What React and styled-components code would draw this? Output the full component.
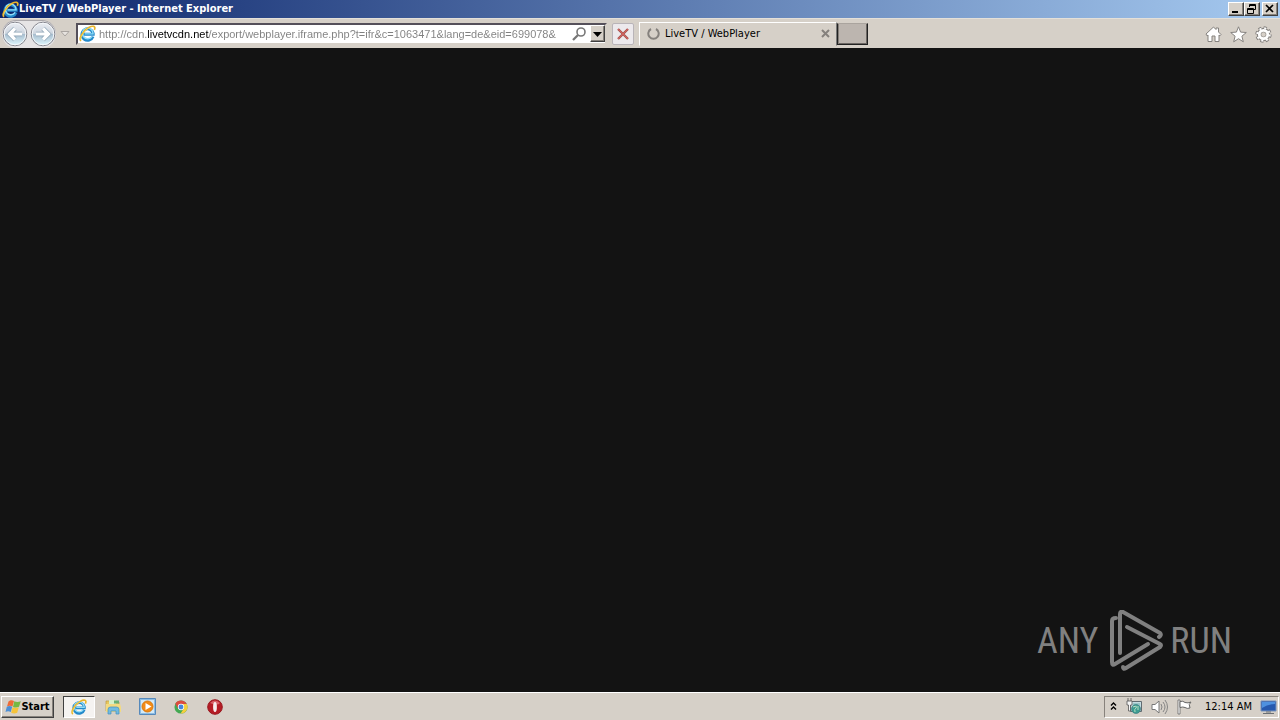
import React from 'react';
import styled, { createGlobalStyle } from 'styled-components';

const ui = '"DejaVu Sans Condensed", "DejaVu Sans", sans-serif';
const face = '#d6d0c8';

const Global = createGlobalStyle`
  * { box-sizing: border-box; }
  body { margin: 0; background: #131313; font-family: ${ui}; font-size: 11px; color: #000; }
  button, input { font: inherit; color: inherit; margin: 0; padding: 0; }
  svg { display: block; flex: none; }
`;

const Screen = styled.div`
  display: flex; flex-direction: column; min-height: 100vh;
`;
const TitleBar = styled.header`
  display: flex; align-items: center; height: 18px; padding: 0 2px;
  background: linear-gradient(90deg, #0b246a, #a6caf0);
`;
const Title = styled.h1`
  flex: 1; margin: 0; font-size: 11px; line-height: 18px; font-weight: 700; color: #fff; white-space: nowrap;
`;
const Raised = styled.button`
  display: flex; align-items: center; justify-content: center;
  background: ${face}; border: 1px solid; border-color: #fff #404040 #404040 #fff;
  box-shadow: inset -1px -1px #87827c;
`;
const WindowButton = styled(Raised)`
  width: 16px; height: 14px; margin-left: ${p => (p.$apart ? '2px' : '0')};
`;
const NavBar = styled.nav`
  display: flex; align-items: center; height: 30px; background: ${face}; border-top: 1px solid #e4e0d9;
`;
const Flat = styled.button`
  display: flex; align-items: center; justify-content: center; border: 0; background: none;
`;
const History = styled.div`
  display: flex; align-items: center; width: 76px; padding-left: 2px;
`;
const HistoryPair = styled.div`
  display: flex; gap: 2px; height: 28px; align-items: center; border-radius: 14px;
  background: #e6e4e5; box-shadow: inset 0 1px #aaa7aa;
`;
const Address = styled.form`
  display: flex; align-items: center; width: 531px; height: 22px; padding: 1px 0 1px 1px;
  background: #fff; border: 2px solid; border-color: #55505a #d6d0c8 #d6d0c8 #55505a;
`;
/* The host part of the address is darker than the rest. */
const Url = styled.input`
  flex: 1; min-width: 0; height: 18px; margin-left: 3px; border: 0; outline: 0;
  font-family: "Liberation Sans", sans-serif;
  background: linear-gradient(90deg, #808080 48px, #000 48px, #000 110px, #808080 110px);
  background-clip: text; -webkit-background-clip: text; -webkit-text-fill-color: transparent;
`;
const Stop = styled(Flat)`
  width: 22px; height: 22px; margin: 0 5px; background: #ece9ec; border: 1px solid #b9b4b8; border-radius: 2px;
`;
const Tab = styled.div`
  display: flex; align-items: center; gap: 5px; width: 198px; height: 24px; padding: 0 5px 0 7px;
  border: 1px solid; border-color: #fff #777 transparent #fff;
`;
const TabTitle = styled.span`
  flex: 1; white-space: nowrap;
`;
const NewTab = styled.button`
  width: 31px; height: 22px; background: #bcb5af; border: 1px solid #222; border-top-color: #aaa49e;
  box-shadow: inset 1px 0 #847f7a, inset -1px -1px #6c6763;
`;
const Tools = styled.div`
  display: flex; gap: 8px; margin-left: auto; padding: 2px 8px 0 0;
`;
const Page = styled.main`
  display: flex; flex: 1; align-items: flex-end; justify-content: flex-end;
  padding: 0 48px 20px; background: #131313;
`;
const Brand = styled.div`
  display: flex; align-items: center; gap: 7px; color: #808080;
  font: 36px/62px "Liberation Sans Narrow", "Roboto Condensed", "Liberation Sans", sans-serif;
`;
const TaskBar = styled.footer`
  display: flex; align-items: center; height: 28px; padding: 0 1px;
  background: ${face}; border-top: 1px solid #fff;
`;
const StartButton = styled(Raised)`
  width: 53px; height: 22px; font-weight: 700;
`;
const Apps = styled.div`
  display: flex; align-items: center; gap: 2px; margin-left: 9px;
`;
const TaskButton = styled(Flat)`
  width: 32px; height: 22px;
  border: 1px solid;
  border-color: ${p => (p.$active ? '#404040 #fff #fff #404040' : 'transparent')};
  background: ${p => (p.$active ? '#f5f3f1' : 'none')};
`;
const Tray = styled.div`
  display: flex; align-items: center; gap: 8px; margin-left: auto; height: 22px; padding: 0 1px 0 4px;
  border: 1px solid; border-color: #87827c #fff #fff #87827c;
`;
const Clock = styled.time`
  margin-left: 4px; white-space: nowrap;
`;

const IE = ({ size = 17 }) => (
  <svg width={size} height={size} viewBox="0 0 18 18" fill="none">
    <path d="M14.8 12.1A6 6 0 1 1 15 8.800v1.100H5" stroke="#2389ca" strokeWidth="3.200" />
    <path d="M13.900 12A5.600 5.600 0 1 1 14.800 8.500v.9H6" stroke="#8edcf8" strokeWidth="1.500" />
    <path d="M2.200 16.800C-1 15 4 6.200 10.400 2.700 14.500.4 18.200.8 16.200 5.200" stroke="#e9b429" strokeWidth="1.800" />
    <path d="M2 15.500C1.900 12 5.400 6.200 10.200 3.300" stroke="#ffe46c" strokeWidth=".7" />
  </svg>
);
const Arrow = ({ back }) => {
  const shape = back ? 'M20 13H8M13 7.500 7.500 13l5.500 5.500' : 'M6 13H18M13 7.500l5.500 5.500-5.500 5.500';
  const id = back ? 'back-fill' : 'forward-fill';
  return (
    <svg width="26" height="26" viewBox="0 0 26 26">
      <defs>
        <linearGradient id={id} x1="0" y1="0" x2="0" y2="1">
          <stop stopColor="#eceef3" /><stop offset=".48" stopColor="#cdd5df" /><stop offset=".52" stopColor="#a9bfd0" /><stop offset="1" stopColor="#dff8fe" />
        </linearGradient>
      </defs>
      <circle cx="13" cy="13" r="11.800" fill={`url(#${id})`} stroke="#85858d" />
      <circle cx="13" cy="13" r="10.800" fill="none" stroke="#f5f8fb" />
      <path d={shape} fill="none" stroke="#8ca3b5" strokeWidth="4.600" />
      <path d={shape} fill="none" stroke="#fff" strokeWidth="3.200" />
    </svg>
  );
};
const Flag = () => (
  <svg width="16" height="16" viewBox="0 0 16 16">
    <path d="M3.500 2.500C5.500.8 7 1 9 2L7.500 7.500C5.500 6.500 4 6.500 2 7.500z" fill="#ed6b37" />
    <path d="M9.300 2.300c2 1 4 1 6.500 0L14 7.800c-2 1-4 1-6 .1z" fill="#75b843" />
    <path d="M1.800 7.800c2-1 3.500-1 5.400 0L5.800 13c-2-1-3.500-1-5.300.1z" fill="#4d8fd5" />
    <path d="M7.500 8.200c2 1 4 1 6.300 0l-1.600 5.500c-2 1-4 1-6 0z" fill="#f5c33b" />
  </svg>
);
const Folder = () => (
  <svg width="17" height="17" viewBox="0 0 17 17">
    <path d="M1 3h5l1 1h7v9H1z" fill="#e7c760" stroke="#bf9b3c" strokeWidth=".7" />
    <path d="M4 2h7v4H4z" fill="#d7efc7" /><path d="M9 2.500h5v3H9z" fill="#69af74" />
    <path d="M1 6h14l1 3v5H1z" fill="#f3da80" />
    <path d="M3 16v-4.500Q3 9 5.500 9h6Q14 9 14 11.500V16h-3v-3H6v3z" fill="#72bbe0" stroke="#438fbd" strokeWidth=".7" />
  </svg>
);
const MediaPlayer = () => (
  <svg width="17" height="17" viewBox="0 0 17 17">
    <path d="M.5.500h16v16H.5z" fill="#8cbde4" stroke="#5689bb" /><path d="M2 2h13v13H2z" fill="#d3e9f7" />
    <circle cx="8.500" cy="8.500" r="5.500" fill="#f28b16" stroke="#d9780e" /><path d="m6.500 5 6 3.500-6 3.500z" fill="#fff" />
  </svg>
);
const Chrome = () => (
  <svg width="14" height="14" viewBox="0 0 16 16">
    <circle cx="8" cy="8" r="7.500" fill="#43a852" />
    <path d="M1.500 4.200A7.500 7.500 0 0 1 14.500 4.500H8L4.800 10z" fill="#dc4b3f" />
    <path d="M8 4.500h6.600A7.500 7.500 0 0 1 7.500 15.500L11.200 9.800z" fill="#f5cf3d" />
    <circle cx="8" cy="8" r="3.600" fill="#fff" /><circle cx="8" cy="8" r="2.800" fill="#4586dc" />
  </svg>
);
const Opera = () => (
  <svg width="16" height="16" viewBox="0 0 16 16">
    <circle cx="8" cy="8" r="7.300" fill="#b51c25" stroke="#9a1820" />
    <path d="M3 4Q8-1 13 4 11 7 3 4" fill="#d9646b" /><ellipse cx="8" cy="8" rx="1.900" ry="5" fill="#f7eded" />
  </svg>
);

export default function App() {
  return (
    <Screen>
      <Global />
      <TitleBar>
        <IE />
        <Title>LiveTV / WebPlayer - Internet Explorer</Title>
        <WindowButton aria-label="Minimize"><svg width="12" height="10"><path d="M2 8h6" stroke="#000" strokeWidth="2" /></svg></WindowButton>
        <WindowButton aria-label="Restore"><svg width="12" height="10" fill="none" stroke="#000"><path d="M3.500 3V.5h6v5H7.500M3 1.500h7M1.500 4.500h6v5h-6zM1 5.500h7" /></svg></WindowButton>
        <WindowButton $apart aria-label="Close"><svg width="12" height="10"><path d="m2 1 7 7m0-7L2 8" stroke="#000" strokeWidth="1.700" /></svg></WindowButton>
      </TitleBar>
      <NavBar>
        <History>
          <HistoryPair>
            <Flat aria-label="Back"><Arrow back /></Flat>
            <Flat aria-label="Forward"><Arrow /></Flat>
          </HistoryPair>
          <Flat aria-label="Recent pages"><svg width="18" height="10"><path d="M5 2.500h8L9 7z" fill="#e7e3df" stroke="#aaa5a1" /></svg></Flat>
        </History>
        <Address onSubmit={e => e.preventDefault()}>
          <IE />
          <Url aria-label="Address" defaultValue="http://cdn.livetvcdn.net/export/webplayer.iframe.php?t=ifr&c=1063471&lang=de&eid=699078&" />
          <Flat aria-label="Search"><svg width="18" height="16" fill="none" stroke="#777"><circle cx="9" cy="6" r="4" strokeWidth="1.600" /><path d="m6 9-5 5" strokeWidth="2.300" /></svg></Flat>
          <Raised type="button" aria-label="Show addresses"><svg width="13" height="15"><path d="M2 6h9L6.500 11z" fill="#000" /></svg></Raised>
        </Address>
        <Stop aria-label="Stop"><svg width="14" height="14" fill="none"><path d="m2 2 10 10M12 2 2 12" stroke="#a85652" strokeWidth="2.400" /><path d="m2 2 10 10M12 2 2 12" stroke="#d6605d" /></svg></Stop>
        <Tab>
          <svg width="13" height="13" fill="none"><path d="M4 2a5.200 5.200 0 1 0 5 0" stroke="#85817d" strokeWidth="2" /></svg>
          <TabTitle>LiveTV / WebPlayer</TabTitle>
          <Flat aria-label="Close tab"><svg width="11" height="11"><path d="m2 2 7 7m0-7L2 9" stroke="#85817d" strokeWidth="2" /></svg></Flat>
        </Tab>
        <NewTab aria-label="New tab" />
        <Tools>
          <Flat aria-label="Home"><svg width="17" height="17" fill="#fff" stroke="#85827f"><path d="m1 8 7.500-7L11 3.500V2h2.500v4L16 8.500l-1 1.300-1-.8v6.500h-4V10H7v5.500H3V9l-1 .8z" /></svg></Flat>
          <Flat aria-label="Favorites"><svg width="17" height="17" fill="#fff" stroke="#85827f"><path d="m8.500.8 2.100 5.300 5.700.4-4.400 3.700 1.400 5.600-4.800-3.100-4.800 3.100 1.400-5.600L.7 6.500l5.700-.4z" /></svg></Flat>
          <Flat aria-label="Settings"><svg width="17" height="17" viewBox="0 0 17 17" fill="none"><circle cx="8.500" cy="8.500" r="6.600" stroke="#85827f" strokeWidth="3.200" strokeDasharray="3 2.180" /><circle cx="8.500" cy="8.500" r="4.500" stroke="#85827f" strokeWidth="4.400" /><circle cx="8.500" cy="8.500" r="6.200" stroke="#fff" strokeWidth="2" strokeDasharray="2 2.870" /><circle cx="8.500" cy="8.500" r="4.200" stroke="#fff" strokeWidth="2.800" /></svg></Flat>
        </Tools>
      </NavBar>
      <Page>
        <Brand>
          <span>ANY</span>
          <svg width="58" height="62" fill="none" stroke="#808080" strokeWidth="4" strokeLinejoin="round" strokeLinecap="round">
            <path d="M15 43V4q0-3 3-2L55 23q2 2-1 4" />
            <path d="m22 17 33 17q2 1 0 3L21 58q-3 2-3-1" />
            <path d="m43 34-33 20q-3 2-3-2V11q0-3 4-3" />
          </svg>
          <span>RUN</span>
        </Brand>
      </Page>
      <TaskBar>
        <StartButton><Flag />Start</StartButton>
        <Apps>
          <TaskButton $active aria-label="Internet Explorer"><IE size={16} /></TaskButton>
          <TaskButton aria-label="Explorer"><Folder /></TaskButton>
          <TaskButton aria-label="Media Player"><MediaPlayer /></TaskButton>
          <TaskButton aria-label="Chrome"><Chrome /></TaskButton>
          <TaskButton aria-label="Opera"><Opera /></TaskButton>
        </Apps>
        <Tray>
          <Flat aria-label="Show hidden icons"><svg width="9" height="12" fill="none" stroke="#000" strokeWidth="1.400"><path d="m2 4.500 2.500-2.500L7 4.500m-5 4L4.500 6 7 8.500" /></svg></Flat>
          <svg width="17" height="17" viewBox="0 0 17 17"><path d="M4.500 3.500h11v10h-11z" fill="#c5dce2" stroke="#606b70" /><path d="M7 5h7v6H7z" fill="#9bc7c8" /><circle cx="10" cy="11" r="4.500" fill="#3c9c91" stroke="#437d82" strokeWidth=".7" /><path d="M7 9q5-2 3 1-2 1-1 4M12 8v4" stroke="#b8dfc1" fill="none" /><path d="M1 3h5v4H4.500v6h-2V7H1zM2 0v3m3-3v3" fill="#f5f5f5" stroke="#555" strokeWidth=".8" /></svg>
          <svg width="17" height="16" viewBox="0 0 17 16" fill="none" stroke="#858585"><path d="M1 5.500h3L8 2v12l-4-3.500H1z" fill="#fff" stroke="#777" /><path d="M10 5q2 3 0 6m2-8q4 5 0 10m2-12q5 7 0 14" /></svg>
          <svg width="17" height="16" viewBox="0 0 17 16"><path d="M2 1h2v14H2z" fill="#fff" stroke="#666" strokeWidth=".8" /><path d="M4 2.500q3-1 5 1 3 1 6-.500-3 2-1 6-3 1-5-.500-2-1-5 0z" fill="#fff" stroke="#666" /></svg>
          <Clock>12:14 AM</Clock>
          <Flat aria-label="Show desktop"><svg width="17" height="16" viewBox="0 0 17 16"><path d="M1 2h15v10H1z" fill="#2659ae" stroke="#7893ba" /><path d="M2 3h13v2Q8 5 2 9z" fill="#4e91df" /><path d="M6 13h5M3 14.500h11" stroke="#6b7075" /></svg></Flat>
        </Tray>
      </TaskBar>
    </Screen>
  );
}
